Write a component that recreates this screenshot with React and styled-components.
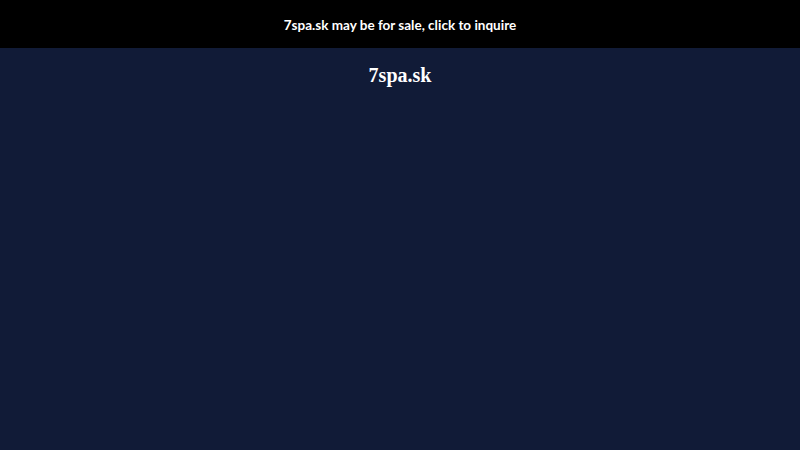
import React from 'react';
import styled, { createGlobalStyle } from 'styled-components';

const GlobalStyle = createGlobalStyle`
  html, body {
    margin: 0;
    padding: 0;
    height: 100%;
    background: #111b37;
  }
  #root {
    min-height: 100vh;
  }
`;

const Page = styled.div`
  min-height: 100vh;
  background: #111b37;
  display: flex;
  flex-direction: column;
`;

const SaleBar = styled.a`
  display: flex;
  align-items: center;
  justify-content: center;
  height: 48px;
  padding-top: 1px;
  box-sizing: border-box;
  background: #000;
  color: #fff;
  font-family: Lato, "Noto Sans", sans-serif;
  font-weight: 700;
  font-size: 13.5px;
  text-decoration: none;
  cursor: pointer;
`;

const Title = styled.h1`
  margin: 15px 0 0;
  text-align: center;
  color: #fff;
  font-family: "Liberation Serif", "DejaVu Serif", serif;
  font-weight: 700;
  font-size: 20px;
  line-height: 24px;
`;

const App = () => {
  return (
    <Page>
      <GlobalStyle />
      <SaleBar href="#">7spa.sk may be for sale, click to inquire</SaleBar>
      <Title>7spa.sk</Title>
    </Page>
  );
};

export default App;
